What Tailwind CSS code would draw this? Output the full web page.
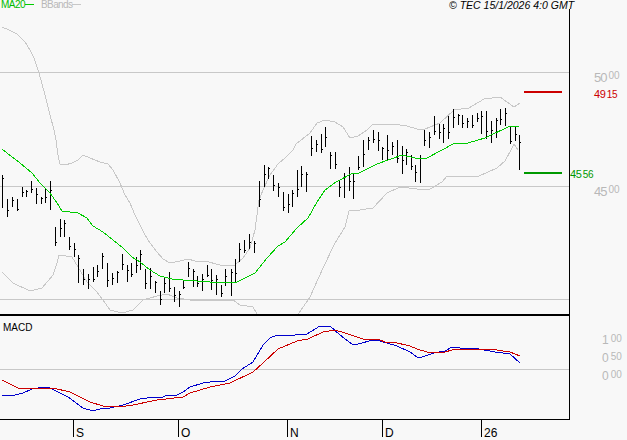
<!doctype html>
<html lang="en">
<head>
  <meta charset="UTF-8">
  <title>Chart</title>
  <script src="https://cdn.jsdelivr.net/npm/@tailwindcss/browser@4"></script>
</head>
<body class="bg-[#f8f8f8] font-['Liberation_Sans',sans-serif] text-black overflow-hidden">
  <div class="w-[627px] h-[440px] flex flex-col">

    <!-- legend strip -->
    <div class="relative z-10 h-[9px] flex items-start leading-[10px] text-[10px] whitespace-nowrap">
      <span class="ml-[1px] w-[23px] text-[#00bb00] tracking-[-0.5px]">MA20</span>
      <span class="ml-[1px] mt-[4px] w-[9px] h-px bg-[#00cc00]"></span>
      <span class="ml-[7px] w-[30px] text-[#b8b8b8] tracking-[-0.6px]">BBands</span>
      <span class="ml-px mt-[4px] w-[9px] h-px bg-[#c8c8c8]"></span>
      <span class="ml-[368px] italic text-[10.5px]">© TEC 15/1/2026 4:0 GMT</span>
    </div>

    <!-- price panel -->
    <div class="flex h-[307px]">
      <div class="w-[570px] h-full border-r border-b-2 border-black">
        <svg class="block w-[569px] h-[305px]" viewBox="0 9 569 305" shape-rendering="crispEdges">
          <g class="stroke-[#c8c8c8] fill-none">
            <path d="M0 72.5H569M0 186.5H569M0 299.5H569"/>
            <polyline points="2,27 9,30 17,34 21,38 25,42 30,50 34,58 38,70 41,80 45,95 50,115 54,130 56,140 58,155 60,164 65,165 72,163 78,160 83,155 90,158 100,162 108,164 113,170 120,183 125,195 130,203 135,215 140,225 145,235 150,243 157,252 163,259 170,263 180,261 188,259 195,261 205,261 220,265 235,265 243,258 250,248 255,230 259,200 263,190 270,175 278,164 285,158 293,150 296,144 310,133 317,123 325,120 335,122 343,127 350,138 358,136 367,130 373,124 382,125 392,124 407,126 417,129 425,129 440,123 454,110 469,108 484,99 500,97 514,107 520,103"/>
            <polyline points="2,272 13,283 30,291 42,288 53,275 57,263 59,255 72,257 78,267 87,282 97,292 103,300 110,310 122,313 133,310 143,300 157,296 167,294 177,298 190,300 233,300 240,305 253,307 257,314 258,320 298,320 299,313 310,297 323,268 335,243 345,227 349,211 360,210 373,208 387,193 400,187 417,189 430,189 442,182 447,176 479,176 497,168 505,161 511,150 514,144 518,150"/>
          </g>
          <path id="bars" class="stroke-black fill-none"/>
          <polyline class="stroke-[#00cc00] fill-none" points="2,149 7,153 20,163 32,173 40,183 50,193 57,203 62,211 78,213 87,218 93,226 103,232 113,240 123,248 132,257 140,262 150,270 160,276 172,279 183,280 210,282 235,283 255,273 267,258 278,246 285,242 297,228 308,218 317,202 325,190 336,182 353,173 359,173 377,164 402,155 415,158 425,159 442,150 453,144 468,143 485,138 510,126 519,127"/>
          <rect x="524" y="91" width="38" height="2" class="fill-[#cc0000]"/>
          <rect x="524" y="172" width="38" height="2" class="fill-[#009900]"/>
        </svg>
      </div>
      <div class="relative flex-1 leading-none">
        <span class="absolute left-[24px] top-[62px] flex items-start text-[#b8b8b8] text-[13px] tracking-[-1px]"><span>50</span><span class="text-[10px] tracking-normal ml-[2px]">00</span></span>
        <span class="absolute left-[24px] top-[80px] text-[#cc0000] text-[11px] tracking-[-0.3px] whitespace-nowrap">49<span class="text-[10px] ml-px">15</span></span>
        <span class="absolute left-0 top-[160px] text-[#009900] text-[11px] tracking-[-0.3px] whitespace-nowrap">45<span class="text-[10px] ml-px">56</span></span>
        <span class="absolute left-[24px] top-[176px] flex items-start text-[#b8b8b8] text-[13px] tracking-[-1px]"><span>45</span><span class="text-[10px] tracking-normal ml-[2px]">00</span></span>
      </div>
    </div>

    <!-- MACD panel -->
    <div class="flex h-[104px]">
      <div class="relative w-[570px] h-full border-r border-b border-black">
        <span class="absolute left-[3px] top-[7px] text-[10px] leading-[10px]">MACD</span>
        <svg class="block w-[569px] h-[103px]" viewBox="0 316 569 103" shape-rendering="crispEdges">
          <path class="stroke-[#c8c8c8]" d="M0 369.5H569"/>
          <polyline class="stroke-[#0000cc] fill-none" points="2,395 15,395 23,393 32,389 45,387 50,388 58,392 68,397 83,408 93,411 103,408 110,408 123,405 140,399 147,398 163,397 167,395 177,395 183,392 190,387 203,383 210,382 225,381 235,376 242,369 253,362 263,345 270,338 277,335 293,336 297,334 307,334 320,326 330,326 340,335 352,344 358,344 373,340 380,341 397,346 410,352 417,357 422,357 434,353 445,351 452,347 460,348 479,349 495,352 510,354 520,363"/>
          <polyline class="stroke-[#cc0000] fill-none" points="2,380 18,388 25,389 53,388 70,392 90,402 103,406 120,407 133,405 157,400 183,397 190,393 210,387 230,383 253,372 263,363 278,349 297,341 308,339 323,332 335,330 345,333 363,339 380,340 385,342 393,342 410,346 417,349 427,352 445,352 452,350 462,349 490,349 510,352 520,356"/>
        </svg>
      </div>
      <div class="relative flex-1 leading-none text-[#b8b8b8]">
        <span class="absolute left-[32px] top-[18px] text-[12px] whitespace-nowrap">1<span class="relative top-[-2px] text-[10px] ml-[2px]">00</span></span>
        <span class="absolute left-[32px] top-[36px] text-[12px] whitespace-nowrap">0<span class="relative top-[-2px] text-[10px] ml-[2px]">50</span></span>
        <span class="absolute left-[32px] top-[54px] text-[12px] whitespace-nowrap">0<span class="relative top-[-2px] text-[10px] ml-[2px]">00</span></span>
      </div>
    </div>

    <!-- date axis -->
    <div class="relative h-[17px] text-[12px] leading-none">
      <span class="absolute left-[73px] top-0 h-[17px] border-l border-black pl-[2px] pt-[7px]">S</span>
      <span class="absolute left-[178px] top-0 h-[17px] border-l border-black pl-[2px] pt-[7px]">O</span>
      <span class="absolute left-[287px] top-0 h-[17px] border-l border-black pl-[2px] pt-[7px]">N</span>
      <span class="absolute left-[382px] top-0 h-[17px] border-l border-black pl-[2px] pt-[7px]">D</span>
      <span class="absolute left-[481px] top-0 h-[17px] border-l border-black pl-[2px] pt-[7px]">26</span>
    </div>
  </div>

  <script>
    // x, high, low for each session
    var bars = [
      [2,175,208],[7,199,217],[12,197,207],[17,199,211],[22,187,197],[26,190,197],[31,181,193],[36,188,204],[41,197,204],[45,188,203],
      [50,181,210],[55,227,246],[60,219,237],[64,220,237],[69,237,250],[74,243,257],[78,255,283],[83,269,285],[88,274,289],[93,267,282],
      [97,265,277],[102,253,269],[107,263,287],[112,273,285],[117,271,283],[122,254,270],[127,265,282],[131,263,277],[136,257,273],[140,250,270],
      [145,269,289],[150,268,289],[155,281,293],[160,291,305],[164,278,293],[169,272,292],[174,287,302],[179,291,307],[183,281,289],[188,262,277],
      [193,269,287],[197,276,287],[202,274,291],[207,265,277],[211,269,290],[216,275,295],[221,285,297],[225,269,286],[231,269,296],[235,259,282],
      [239,243,262],[244,240,253],[249,234,249],[254,241,253],[259,181,207],[264,165,187],[268,167,179],[273,175,191],[278,183,197],[283,192,211],
      [288,194,213],[292,190,207],[297,170,197],[301,166,187],[306,172,192],[311,136,156],[316,140,152],[321,134,153],[325,127,147],[330,152,169],
      [335,152,169],[339,180,197],[344,173,198],[349,167,191],[353,173,199],[358,156,170],[363,140,167],[368,137,150],[373,130,143],[378,132,151],
      [382,147,160],[387,135,160],[392,142,155],[397,140,163],[402,146,174],[406,149,165],[411,155,170],[415,165,182],[420,155,183],[424,130,146],
      [429,132,148],[434,116,135],[439,124,139],[443,124,143],[448,116,139],[453,109,128],[458,114,125],[462,115,128],[467,118,128],[472,115,128],
      [477,113,122],[481,111,134],[486,111,139],[491,121,143],[496,118,138],[500,109,125],[505,108,126],[510,127,144],[515,127,141],[519,135,170]
    ];
    var d = '';
    bars.forEach(function (b, i) {
      var x = b[0] + 0.5, h = b[2] - b[1];
      var open = Math.round(b[1] + h * (((i * 3) % 7 + 1) / 9));
      var close = Math.round(b[1] + h * (((i * 5) % 8 + 1) / 10));
      d += 'M' + x + ' ' + b[1] + 'V' + b[2];
      // one pixel open/close ticks, the open only on every other bar
      if (i % 2) d += 'M' + (x - 1) + ' ' + (open + 0.5) + 'H' + x;
      d += 'M' + x + ' ' + (close + 0.5) + 'H' + (x + 1);
    });
    document.getElementById('bars').setAttribute('d', d);
  </script>
</body>
</html>
